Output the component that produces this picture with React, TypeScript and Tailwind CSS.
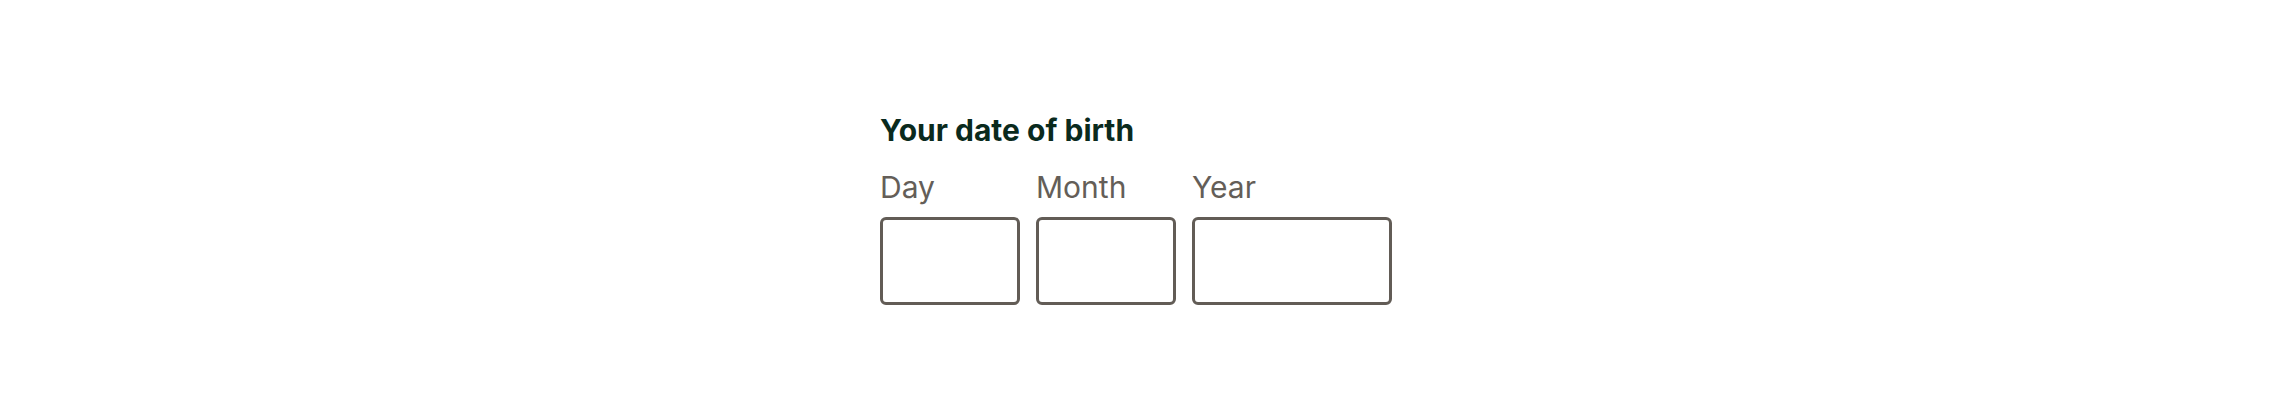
export default function App() {
  const fields = [
    { label: 'Day', width: 'w-[140px]' },
    { label: 'Month', width: 'w-[140px]' },
    { label: 'Year', width: 'w-[200px]' },
  ];

  return (
    <div className="min-h-screen bg-white pt-[112px]" style={{ fontFamily: 'Inter, Lato, sans-serif' }}>
      <div className="mx-auto w-[512px]">
        <h2 className="text-[30px] leading-[36px] font-bold text-[#0a2a1d]">Your date of birth</h2>
        <div className="mt-[21px] flex gap-4">
          {fields.map((f) => (
            <label key={f.label} className="flex flex-col">
              <span className="text-[30px] leading-[36px] text-[#645e58]">{f.label}</span>
              <input
                type="text"
                className={`mt-[12px] h-[88px] ${f.width} rounded-[6px] border-[3px] border-[#625c56] bg-white outline-none`}
              />
            </label>
          ))}
        </div>
      </div>
    </div>
  );
}
